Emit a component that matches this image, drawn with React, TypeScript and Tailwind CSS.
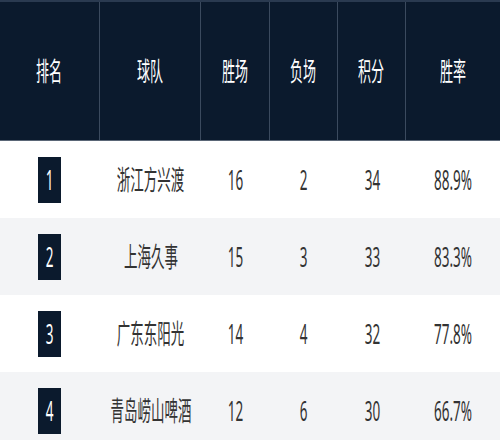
import React from "react";

const rows = [
  { rank: "1", team: "浙江方兴渡", w: "16", l: "2", p: "34", r: "88.9%" },
  { rank: "2", team: "上海久事", w: "15", l: "3", p: "33", r: "83.3%" },
  { rank: "3", team: "广东东阳光", w: "14", l: "4", p: "32", r: "77.8%" },
  { rank: "4", team: "青岛崂山啤酒", w: "12", l: "6", p: "30", r: "66.7%" },
];

const cols = ["w-[100px]", "w-[101px]", "w-[69px]", "w-[68px]", "w-[68px]", "flex-1"];
const heads = ["排名", "球队", "胜场", "负场", "积分", "胜率"];

const T = ({ children, cls = "" }: { children: React.ReactNode; cls?: string }) => (
  <span className={`inline-block scale-x-[0.5] whitespace-nowrap leading-none ${cls}`}>{children}</span>
);

export default function App() {
  return (
    <div
      className="w-[500px] h-[440px] overflow-hidden bg-white"
      style={{ fontFamily: '"Noto Sans", "Noto Sans CJK SC", sans-serif' }}
    >
      <div className="flex h-[141px] bg-[#0b1a2d] border-t-2 border-[#2a3a50] border-b border-b-[#5a6676]">
        {heads.map((h, i) => (
          <div
            key={h}
            className={`${cols[i]} flex items-center justify-center text-white text-[26px] ${i < 5 ? "border-r border-[#3b4a5e]" : ""}`}
          >
            <T>{h}</T>
          </div>
        ))}
      </div>
      {rows.map((r, idx) => (
        <div
          key={r.rank}
          className={`flex h-[77px] items-center text-[#333333] text-[27px] ${idx % 2 === 1 ? "bg-[#f3f4f6]" : "bg-white"}`}
        >
          <div className={`${cols[0]} flex justify-center pr-[1px]`}>
            <div className="w-[23px] h-[46px] bg-[#0b1a2d] flex items-center justify-center text-white text-[27px]">
              <T>{r.rank}</T>
            </div>
          </div>
          <div className={`${cols[1]} flex justify-center`}>
            <T>{r.team}</T>
          </div>
          <div className={`${cols[2]} flex justify-center`}>
            <T>{r.w}</T>
          </div>
          <div className={`${cols[3]} flex justify-center`}>
            <T>{r.l}</T>
          </div>
          <div className={`${cols[4]} flex justify-center`}>
            <T>{r.p}</T>
          </div>
          <div className={`${cols[5]} flex justify-center`}>
            <T>{r.r}</T>
          </div>
        </div>
      ))}
    </div>
  );
}
